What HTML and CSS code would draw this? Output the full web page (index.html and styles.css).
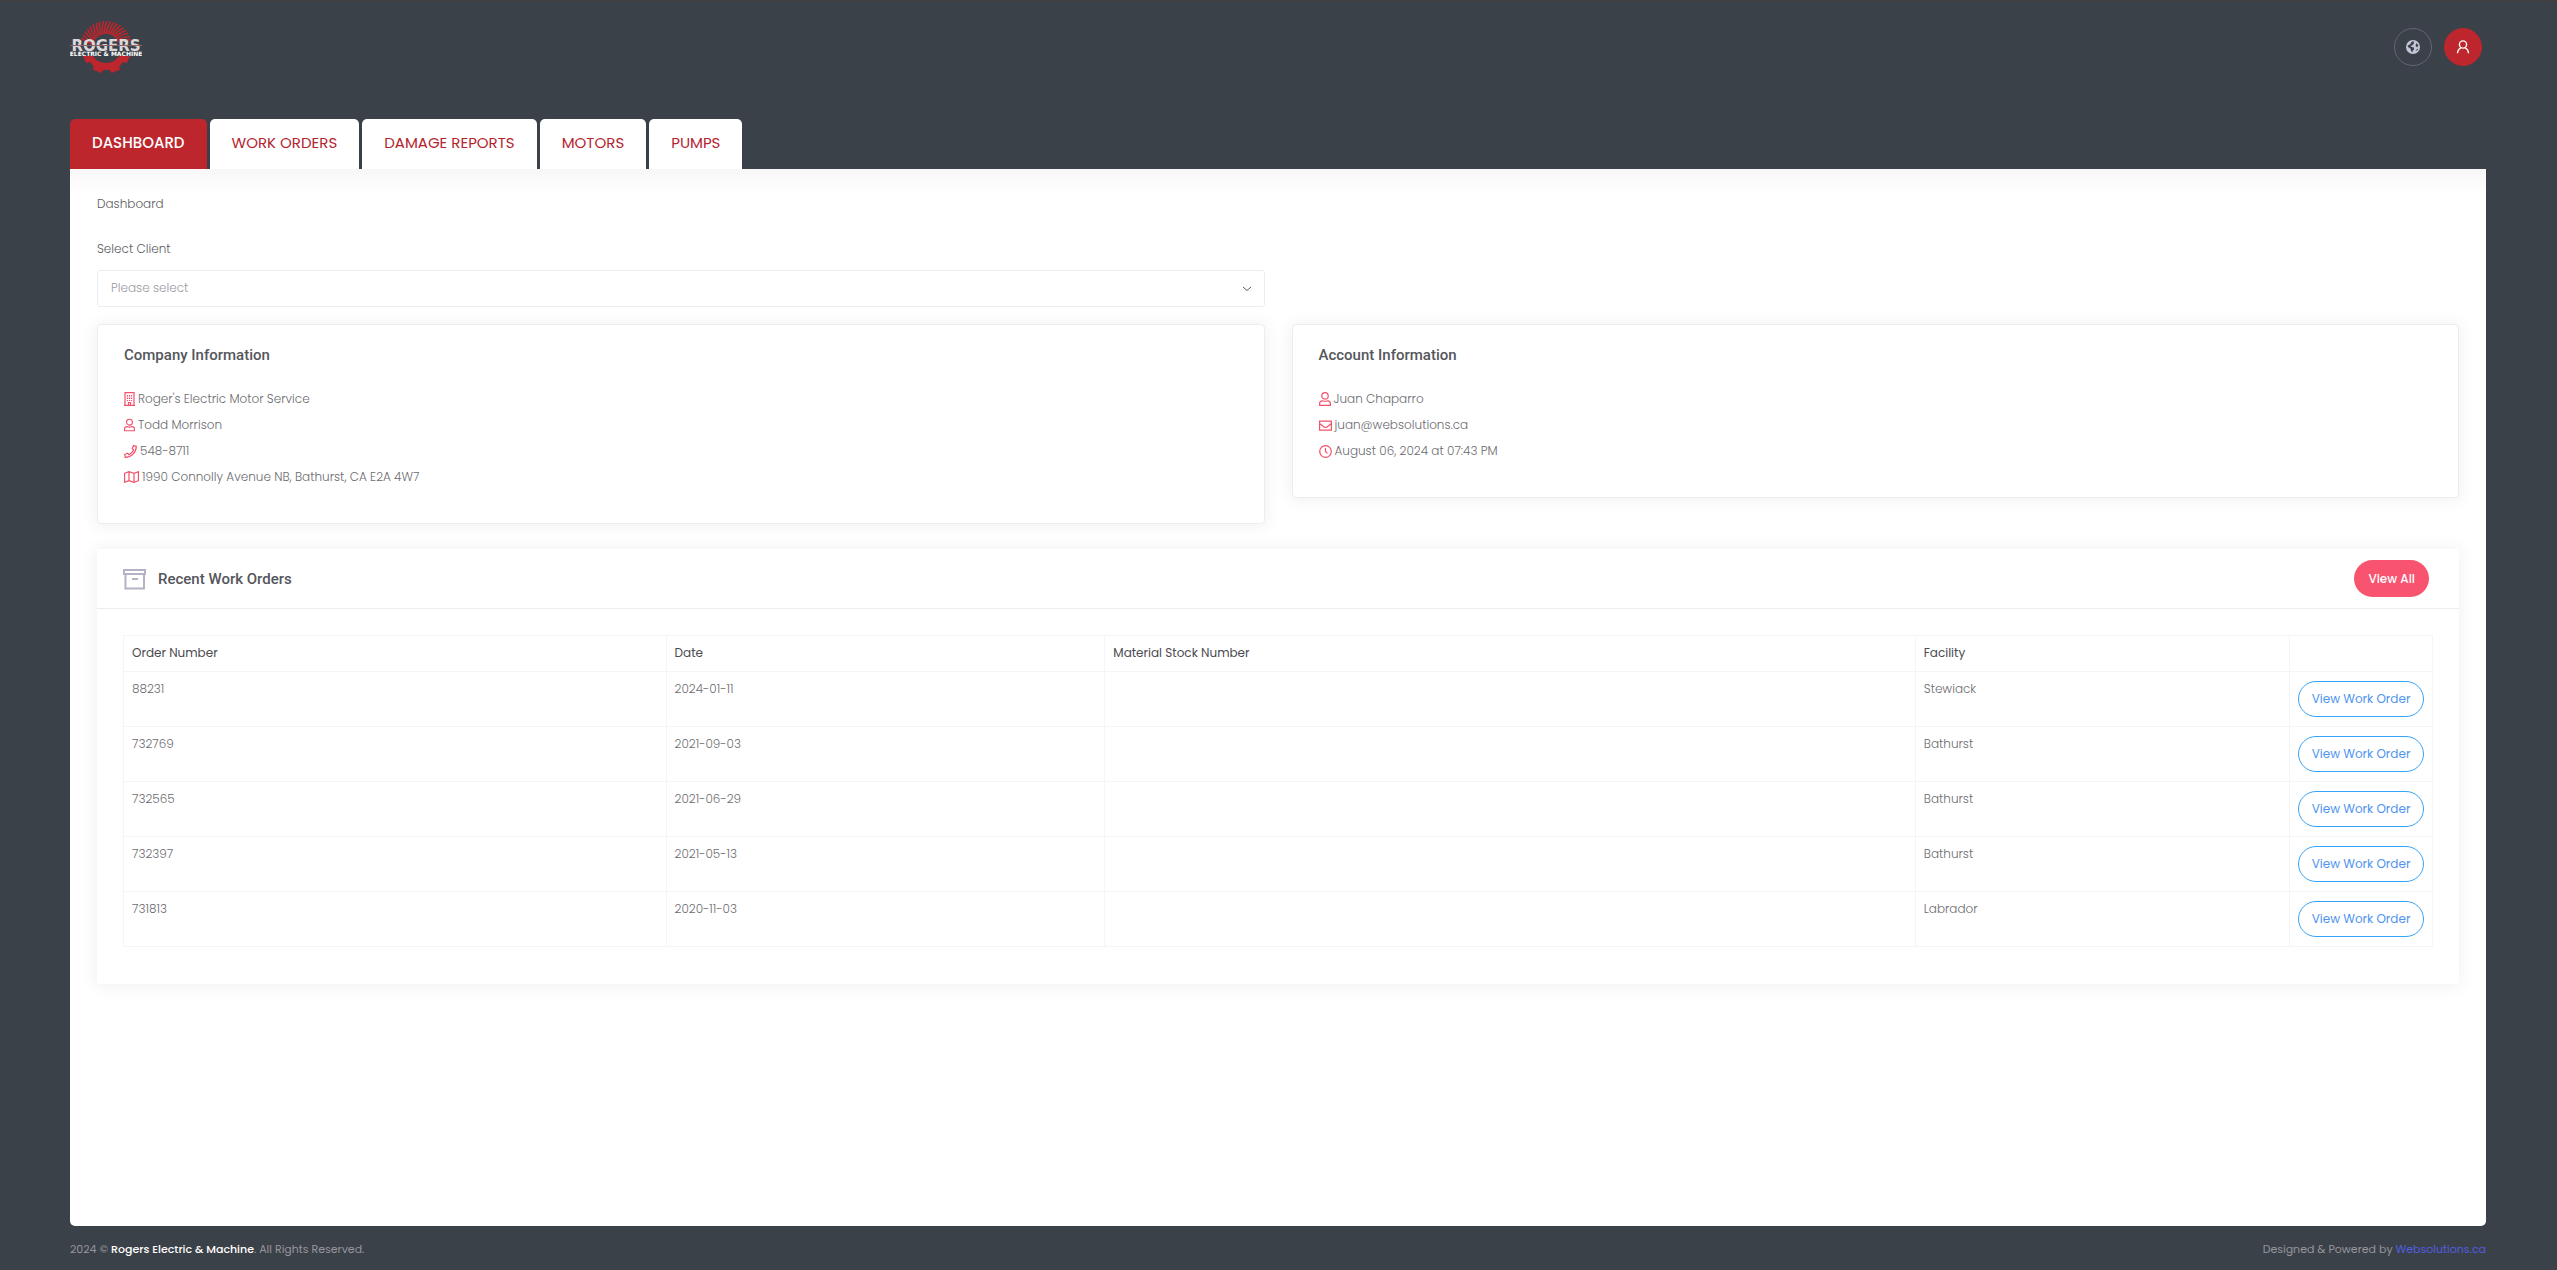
FILE: index.html
```html
<!DOCTYPE html>
<html lang="en">
<head>
<meta charset="utf-8">
<meta name="viewport" content="width=device-width, initial-scale=1">
<title>Dashboard | Rogers Electric &amp; Machine</title>
<link rel="stylesheet" href="styles.css">
</head>
<body>
<svg class="sprite" aria-hidden="true">
  <symbol id="i-user" viewBox="0 0 12 14"><path d="M6 .7a3.2 3.2 0 1 1 0 6.4A3.2 3.2 0 0 1 6 .7zM.6 13.3v-1.6c0-1.7 1.1-2.9 2.7-2.9.6 0 1.400.5 2.700.5s2.100-.5 2.700-.5c1.600 0 2.700 1.200 2.700 2.900v1.600z"/></symbol>
</svg>
<header class="header">
  <a class="logo" href="#" aria-label="Rogers Electric &amp; Machine">
    <svg width="72" height="54" viewBox="0 0 72 54">
      <g fill="none" stroke="#bc262c" stroke-width="1.700">
        <path id="blade" d="M35 14q-1-6 2-13"/>
        <use href="#blade" transform="rotate(-72 36 27)"/><use href="#blade" transform="rotate(-64 36 27)"/><use href="#blade" transform="rotate(-56 36 27)"/><use href="#blade" transform="rotate(-48 36 27)"/><use href="#blade" transform="rotate(-40 36 27)"/><use href="#blade" transform="rotate(-32 36 27)"/><use href="#blade" transform="rotate(-24 36 27)"/><use href="#blade" transform="rotate(-16 36 27)"/><use href="#blade" transform="rotate(-8 36 27)"/><use href="#blade" transform="rotate(8 36 27)"/><use href="#blade" transform="rotate(16 36 27)"/><use href="#blade" transform="rotate(24 36 27)"/><use href="#blade" transform="rotate(32 36 27)"/><use href="#blade" transform="rotate(40 36 27)"/><use href="#blade" transform="rotate(48 36 27)"/><use href="#blade" transform="rotate(56 36 27)"/><use href="#blade" transform="rotate(64 36 27)"/><use href="#blade" transform="rotate(72 36 27)"/>
      </g>
      <path fill="#bc262c" d="M13 36h10a15 14 0 0 0 26 0h11l-3 7-4-1-4 5 1.500 2.500-9 3.500-1.500-3h-7l-1.500 3-9-3.500L24 47l-4-5-4 1z"/>
      <text class="logo-name" x="36" y="31" text-anchor="middle">ROGERS</text>
      <path stroke="#8f6468" stroke-width="1" d="M0 25.500h72"/>
      <text class="logo-sub" x="36" y="36" text-anchor="middle">ELECTRIC &amp; MACHINE</text>
    </svg>
  </a>
  <div class="actions">
    <button class="round" aria-label="Language"><svg width="16" height="16" viewBox="0 0 16 16"><circle cx="8" cy="8" r="7" fill="#c4c5d6"/><path fill="#3b4149" d="M2.500 6.500L5 5.500 6.500 3l2-1 .5 2.500L7 6.500l-1.500.5 1 1L9 8.500v2L7.500 12v1.500L6 12l-.5-2.500-2-1zM11.500 4l2 2.500-1.500 2-1.500-2zM10.500 12l2-2.500.5 1.500z"/></svg></button>
    <button class="round round-red" aria-label="Account"><svg width="14" height="14" viewBox="0 0 14 14" fill="none" stroke="#fff" stroke-width="1.400"><circle cx="7" cy="4.500" r="3.600"/><path d="M1.500 13.300c.2-3 1.800-4.800 3.500-5.500M12.500 13.300c-.2-3-1.800-4.800-3.500-5.500"/></svg></button>
  </div>
</header>

<nav class="tabs">
  <a class="tab active" href="#">DASHBOARD</a>
  <a class="tab" href="#">WORK ORDERS</a>
  <a class="tab" href="#">DAMAGE REPORTS</a>
  <a class="tab" href="#">MOTORS</a>
  <a class="tab" href="#">PUMPS</a>
</nav>

<main class="content">
  <p class="crumb">Dashboard</p>
  <div class="columns picker">
    <div>
      <label for="client">Select Client</label>
      <div class="select-wrap">
        <select id="client"><option>Please select</option></select>
        <svg class="chevron" width="10" height="6" viewBox="0 0 10 6" fill="none" stroke="#5b5b62"><path d="M1 1l4 3.500L9 1"/></svg>
      </div>
    </div>
  </div>
  <div class="columns">
    <section class="card">
      <h2>Company Information</h2>
      <ul>
        <li><svg width="11" height="14" viewBox="0 0 11 14"><path d="M1 .6h9v12.800H1zM0 13.400h11M4.500 13v-2.500h2V13"/><path stroke-dasharray="1.500 1" d="M3.500 3v6M5.500 3v6M7.500 3v6"/></svg>Roger's Electric Motor Service</li>
        <li><svg width="11" height="14"><use href="#i-user"/></svg>Todd Morrison</li>
        <li><svg width="13" height="13" viewBox="0 0 13 13"><path d="M9.500.7l2.800.600C12.300 7.500 7.500 12.300 1.300 12.300L.7 9.500l2.900-1.300 1.300 1.500c2-.9 3.800-2.700 4.700-4.700L8.200 3.700z"/></svg>548-8711</li>
        <li><svg width="15" height="12" viewBox="0 0 15 12"><path d="M.6 2.300L5 .7l5 1.600L14.400.7v9L10 11.300 5 9.700.6 11.300zM5 .7v9M10 2.300v9"/></svg>1990 Connolly Avenue NB, Bathurst, CA E2A 4W7</li>
      </ul>
    </section>
    <section class="card">
      <h2>Account Information</h2>
      <ul>
        <li><svg width="12" height="14"><use href="#i-user"/></svg>Juan Chaparro</li>
        <li><svg width="13" height="11" viewBox="0 0 13 11"><path d="M.6 1.200h11.800v9H.6zM.6 3.500L5 7q1.500 1 3 0l4.400-3.500"/></svg>juan@websolutions.ca</li>
        <li><svg width="13" height="13" viewBox="0 0 13 13"><circle cx="6.500" cy="6.500" r="5.800"/><path d="M6.500 3v3.800l2 1.600"/></svg>August 06, 2024 at 07:43 PM</li>
      </ul>
    </section>
  </div>

  <section class="orders">
    <div class="orders-head">
      <svg width="24" height="22" viewBox="0 0 24 22" fill="none" stroke="#b5b2c6" stroke-width="2"><path d="M1 2h21v4H1zM2.500 6v14.500h18.500V6M9 11h6"/></svg>
      <h2>Recent Work Orders</h2>
      <button class="view-all">View All</button>
    </div>
    <div class="orders-body">
      <table>
        <colgroup><col class="c-order"><col class="c-date"><col class="c-stock"><col class="c-facility"><col class="c-action"></colgroup>
        <thead><tr><th>Order Number</th><th>Date</th><th>Material Stock Number</th><th>Facility</th><th></th></tr></thead>
        <tbody>
          <tr><td>88231</td><td>2024-01-11</td><td></td><td>Stewiack</td><td><button class="view">View Work Order</button></td></tr>
          <tr><td>732769</td><td>2021-09-03</td><td></td><td>Bathurst</td><td><button class="view">View Work Order</button></td></tr>
          <tr><td>732565</td><td>2021-06-29</td><td></td><td>Bathurst</td><td><button class="view">View Work Order</button></td></tr>
          <tr><td>732397</td><td>2021-05-13</td><td></td><td>Bathurst</td><td><button class="view">View Work Order</button></td></tr>
          <tr><td>731813</td><td>2020-11-03</td><td></td><td>Labrador</td><td><button class="view">View Work Order</button></td></tr>
        </tbody>
      </table>
    </div>
  </section>
</main>

<footer class="footer">
  <span>2024 © <a class="brand" href="#">Rogers Electric &amp; Machine</a>. All Rights Reserved.</span>
  <span>Designed &amp; Powered by <a class="maker" href="#">Websolutions.ca</a></span>
</footer>
</body>
</html>
```

FILE: styles.css
```css
* { box-sizing: border-box; }
body {
  margin: 0;
  min-height: 100vh;
  padding: 0 71px 0 70px;
  display: flex;
  flex-direction: column;
  background: #3b4149;
  border-top: 1px solid #433f3f;
  color: #6c6c70;
  font: 300 12px/20px Poppins, Inter, sans-serif;
}
a { text-decoration: none; }
button, select { font: inherit; }
h2 { margin: 0; font: 500 15px/20px Roboto, sans-serif; color: #55565c; }
.sprite { position: absolute; width: 0; height: 0; }

.header {
  height: 118px;
  padding: 19px 4px 0 0;
  display: flex;
  justify-content: space-between;
  align-items: flex-start;
}
.logo svg { display: block; }
.logo-name { font: 700 15px "DejaVu Sans", sans-serif; fill: #dcd6d8; }
.logo-sub { font: 700 6px "DejaVu Sans", sans-serif; fill: #fff; }
.actions { display: flex; gap: 12px; padding-top: 8px; }
.round {
  width: 38px;
  height: 38px;
  padding: 0;
  display: flex;
  align-items: center;
  justify-content: center;
  background: none;
  border: 1px solid #636672;
  border-radius: 50%;
}
.round-red { background: #bc262c; border-color: #bc262c; }

.tabs { display: flex; gap: 3px; }
.tab {
  height: 50px;
  padding: 0 22px;
  border-radius: 5px 5px 0 0;
  background: #fff;
  color: #b4242f;
  font-size: 15px;
  font-weight: 400;
  line-height: 48px;
}
.tab.active { background: #bc262c; color: #fff; font-weight: 500; }

.content {
  flex: 1;
  padding: 25px 27px 40px;
  background: #fff linear-gradient(#f7f7f7, #fff) top / 100% 24px no-repeat;
  border-radius: 0 0 5px 5px;
}
.crumb { margin: 0 0 25px; color: #5d5d62; }
.columns { display: grid; grid-template-columns: 1fr 1fr; gap: 27px; align-items: start; }
.picker { margin-bottom: 17px; }
.picker label { display: block; margin-bottom: 11px; color: #5d5d62; }
.select-wrap { position: relative; }
.select-wrap select {
  display: block;
  width: 100%;
  height: 37px;
  padding: 0 13px 1px;
  appearance: none;
  background: #fff;
  border: 1px solid #ebedf2;
  border-radius: 3px;
  color: #9b9ba3;
}
.chevron { position: absolute; right: 13px; top: 16px; }

.card {
  padding: 20px 26px 33px;
  background: #fff;
  border: 1px solid #ebedf2;
  border-radius: 4px;
  box-shadow: 0 1px 15px 1px rgba(69, 65, 78, .08);
}
.card ul { margin: 21px 0 0; padding: 0; list-style: none; }
.card li { height: 26px; display: flex; align-items: center; gap: 3px; }
.card li svg { fill: none; stroke: #f4516c; stroke-width: 1.2; }

.orders {
  margin-top: 25px;
  background: #fff;
  box-shadow: 0 1px 15px 1px rgba(69, 65, 78, .08);
}
.orders-head {
  height: 60px;
  padding: 0 30px 0 26px;
  display: flex;
  align-items: center;
  gap: 11px;
  border-bottom: 1px solid #ebedf2;
}
.view-all {
  height: 37px;
  margin-left: auto;
  padding: 0 14px;
  background: #f8536f;
  border: 0;
  border-radius: 19px;
  color: #fff;
  font-weight: 500;
}
.orders-body { padding: 26px 26px 37px; }
table { width: 100%; border-collapse: collapse; table-layout: fixed; }
.c-order { width: 23.5%; }
.c-date { width: 19%; }
.c-stock { width: 35.1%; }
.c-action { width: 143px; }
th, td { padding: 7px 8px; border: 1px solid #f4f5f8; text-align: left; vertical-align: top; }
th { height: 36px; color: #4b4b50; font-weight: 400; }
td { height: 55px; }
td:last-child { vertical-align: middle; }
.view {
  display: block;
  width: 100%;
  height: 36px;
  padding: 0;
  background: #fff;
  border: 1px solid #36a3f7;
  border-radius: 18px;
  color: #4f94ee;
  font-weight: 400;
}

.footer {
  height: 44px;
  padding-top: 2px;
  display: flex;
  justify-content: space-between;
  align-items: center;
  color: #96969c;
  font-size: 11px;
  font-weight: 400;
}
.brand { color: #fff; font-weight: 500; }
.maker { color: #525ee0; }
```
